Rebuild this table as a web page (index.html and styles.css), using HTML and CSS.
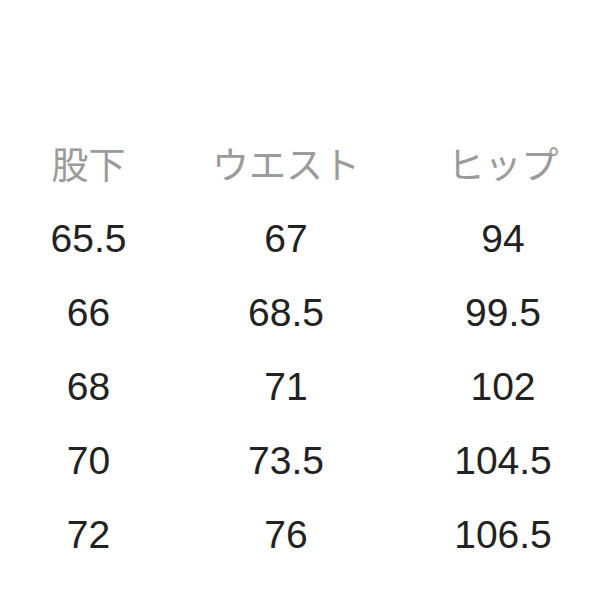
FILE: index.html
```html
<!DOCTYPE html>
<html lang="ja">
<head>
<meta charset="utf-8">
<link rel="stylesheet" href="styles.css">
</head>
<body>
<div class="table">
  <div class="row head">
    <div class="cell">股下</div>
    <div class="cell">ウエスト</div>
    <div class="cell">ヒップ</div>
  </div>
  <div class="row">
    <div class="cell">65.5</div>
    <div class="cell">67</div>
    <div class="cell">94</div>
  </div>
  <div class="row">
    <div class="cell">66</div>
    <div class="cell">68.5</div>
    <div class="cell">99.5</div>
  </div>
  <div class="row">
    <div class="cell">68</div>
    <div class="cell">71</div>
    <div class="cell">102</div>
  </div>
  <div class="row">
    <div class="cell">70</div>
    <div class="cell">73.5</div>
    <div class="cell">104.5</div>
  </div>
  <div class="row">
    <div class="cell">72</div>
    <div class="cell">76</div>
    <div class="cell">106.5</div>
  </div>
</div>
</body>
</html>
```
FILE: styles.css
```css
html, body {
  margin: 0;
  padding: 0;
  background: #ffffff;
}
.table {
  padding-top: 125px;
  padding-left: 7px;
  font-family: "Liberation Sans", Arial, "Noto Sans CJK JP", sans-serif;
}
.row {
  display: grid;
  grid-template-columns: 163px 232px 202px;
  height: 74px;
  line-height: 74px;
  font-size: 39px;
  color: #222222;
}
.cell {
  text-align: center;
  white-space: nowrap;
}
.head {
  height: 77px;
  line-height: 77px;
  font-family: "Noto Sans CJK JP", sans-serif;
  font-size: 37px;
  color: #9b9b9b;
}
```
